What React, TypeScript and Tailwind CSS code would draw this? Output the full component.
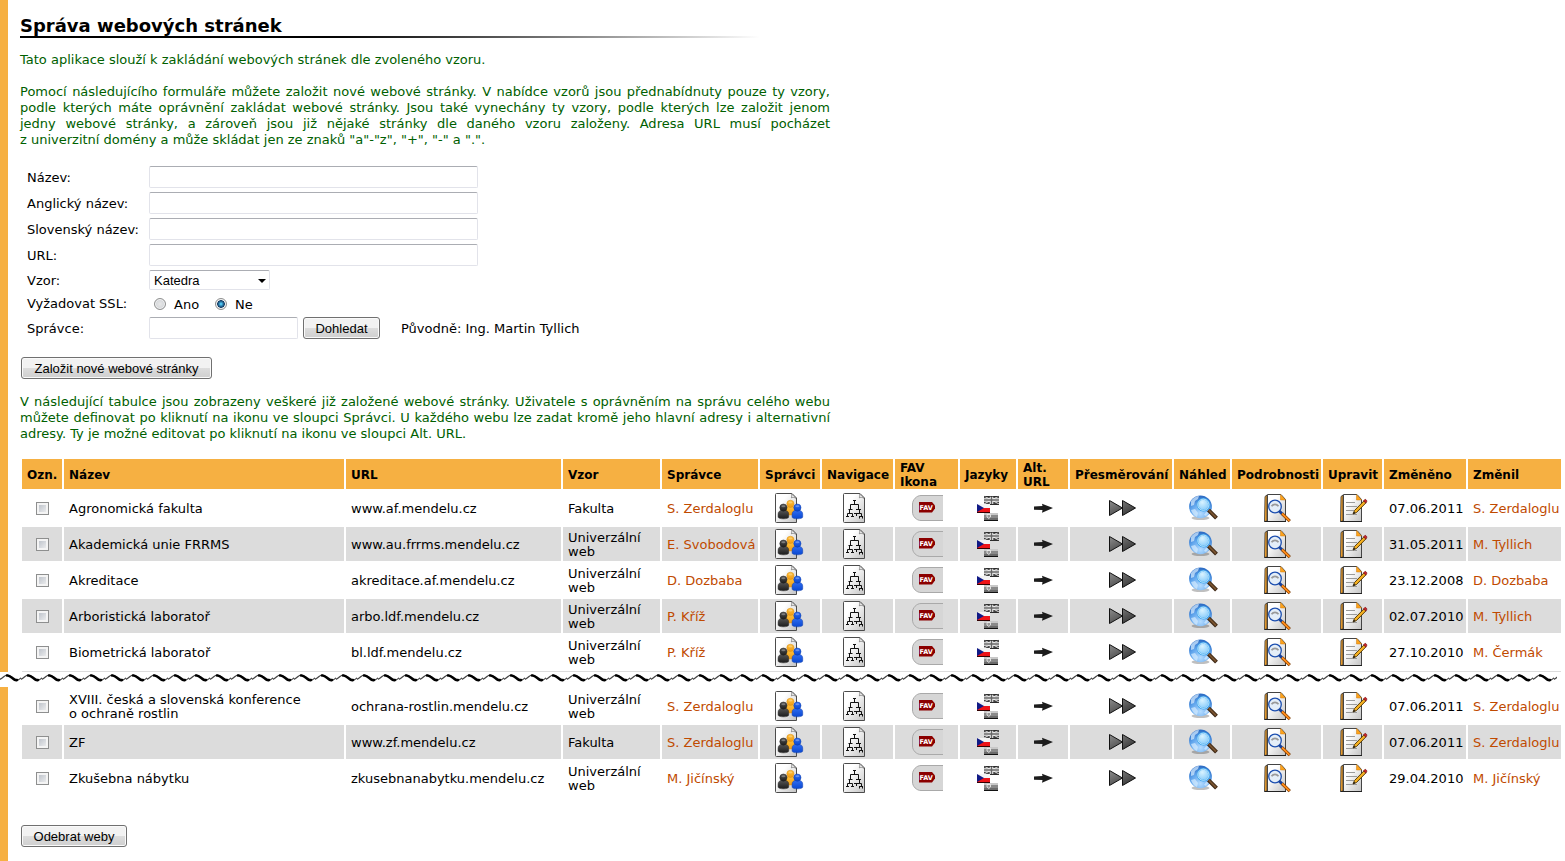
import type { ReactNode } from 'react';

type Site = {
  name: ReactNode;
  label: string;
  url: string;
  template: string;
  admin: string;
  changed: string;
  changedBy: string;
};

const UNI = 'Univerzální web';

const firstSites: Site[] = [
  { name: 'Agronomická fakulta', label: 'Agronomická fakulta', url: 'www.af.mendelu.cz', template: 'Fakulta', admin: 'S. Zerdaloglu', changed: '07.06.2011', changedBy: 'S. Zerdaloglu' },
  { name: 'Akademická unie FRRMS', label: 'Akademická unie FRRMS', url: 'www.au.frrms.mendelu.cz', template: UNI, admin: 'E. Svobodová', changed: '31.05.2011', changedBy: 'M. Tyllich' },
  { name: 'Akreditace', label: 'Akreditace', url: 'akreditace.af.mendelu.cz', template: UNI, admin: 'D. Dozbaba', changed: '23.12.2008', changedBy: 'D. Dozbaba' },
  { name: 'Arboristická laboratoř', label: 'Arboristická laboratoř', url: 'arbo.ldf.mendelu.cz', template: UNI, admin: 'P. Kříž', changed: '02.07.2010', changedBy: 'M. Tyllich' },
  { name: 'Biometrická laboratoř', label: 'Biometrická laboratoř', url: 'bl.ldf.mendelu.cz', template: UNI, admin: 'P. Kříž', changed: '27.10.2010', changedBy: 'M. Čermák' },
];

const lastSites: Site[] = [
  { name: <>XVIII. česká a slovenská konference<br />o&nbsp;ochraně rostlin</>, label: 'XVIII. konference', url: 'ochrana-rostlin.mendelu.cz', template: UNI, admin: 'S. Zerdaloglu', changed: '07.06.2011', changedBy: 'S. Zerdaloglu' },
  { name: 'ZF', label: 'ZF', url: 'www.zf.mendelu.cz', template: 'Fakulta', admin: 'S. Zerdaloglu', changed: '07.06.2011', changedBy: 'S. Zerdaloglu' },
  { name: 'Zkušebna nábytku', label: 'Zkušebna nábytku', url: 'zkusebnanabytku.mendelu.cz', template: UNI, admin: 'M. Jičínský', changed: '29.04.2010', changedBy: 'M. Jičínský' },
];

const headers = ['Ozn.', 'Název', 'URL', 'Vzor', 'Správce', 'Správci', 'Navigace', 'FAV Ikona', 'Jazyky', 'Alt. URL', 'Přesměrování', 'Náhled', 'Podrobnosti', 'Upravit', 'Změněno', 'Změnil'];

// gradients shared by all the row icons
function IconDefs() {
  return (
    <svg className="absolute h-0 w-0" aria-hidden="true">
      <defs>
        <linearGradient id="paper" x1="0" y1="0" x2="1" y2="1">
          <stop offset="0.3" stopColor="#fff" />
          <stop offset="1" stopColor="#c4c4c4" />
        </linearGradient>
        <linearGradient id="orange" x1="0" y1="0" x2="0" y2="1">
          <stop offset="0" stopColor="#ffc13a" />
          <stop offset="1" stopColor="#f29c14" />
        </linearGradient>
        <linearGradient id="blue" x1="0" y1="0" x2="0" y2="1">
          <stop offset="0" stopColor="#2f6cf0" />
          <stop offset="1" stopColor="#0a48d0" />
        </linearGradient>
        <linearGradient id="black" x1="0" y1="0" x2="0" y2="1">
          <stop offset="0" stopColor="#555" />
          <stop offset="1" stopColor="#1c1c1c" />
        </linearGradient>
        <linearGradient id="play" x1="0" y1="0" x2="1" y2="1">
          <stop offset="0" stopColor="#8d8d8d" />
          <stop offset="1" stopColor="#2b2b2b" />
        </linearGradient>
        <radialGradient id="globe" cx="0.5" cy="0.8" r="0.75">
          <stop offset="0" stopColor="#b4dcff" />
          <stop offset="0.6" stopColor="#5fa4ec" />
          <stop offset="1" stopColor="#2f6fc6" />
        </radialGradient>
        <radialGradient id="lens" cx="0.4" cy="0.3" r="0.8">
          <stop offset="0" stopColor="#d9f3ff" />
          <stop offset="1" stopColor="#7cc6fa" />
        </radialGradient>
      </defs>
    </svg>
  );
}

function Icon({ children }: { children: ReactNode }) {
  return <svg className="block h-8 w-8" viewBox="0 0 32 32" fill="none" aria-hidden="true">{children}</svg>;
}

function Sheet() {
  return (
    <>
      <path d="M2.5 1.5H18L22.5 6v24.5h-20a1 1 0 0 1-1-1v-27a1 1 0 0 1 1-1z" fill="url(#paper)" stroke="#4c4c4c" />
      <path d="M17.5 1.8c.6 1.5 .3 3-.2 4 1.2-.5 3-.6 4.700.4z" fill="#fff" stroke="#777" strokeWidth="0.8" />
    </>
  );
}

function Person({ x, y, fill, stroke }: { x: number; y: number; fill: string; stroke: string }) {
  return (
    <g transform={`translate(${x} ${y})`} fill={fill} stroke={stroke} strokeWidth="0.5">
      <path d="M-5.3 9.500V6.500C-5.300 4-3.500 2.800-1.800 2.800H1.800C3.500 2.800 5.300 4 5.300 6.500V9.500C5.300 11.800-5.300 11.800-5.300 9.500z" />
      <circle r="3.6" />
      <ellipse cy="-1.4" rx="2" ry="1" fill="#fff" fillOpacity="0.3" stroke="none" />
    </g>
  );
}

function ManagersIcon() {
  return (
    <Icon>
      <Sheet />
      <Person x={16.4} y={11.8} fill="url(#orange)" stroke="#d98a10" />
      <Person x={9.4} y={15.6} fill="url(#black)" stroke="#222" />
      <Person x={23.4} y={15.6} fill="url(#blue)" stroke="#0a3aa8" />
    </Icon>
  );
}

function NavIcon() {
  return (
    <Icon>
      <Sheet />
      <path
        d="M11 8.500h3M12.500 8.500v4M8.500 17v-4.500h8v4.500M6.500 17.500h4M14 17.500h5M7.500 17.500v4M5.500 24v-2.500h5V24M4 24.500h3M9 24.500h3M17.500 17.500v4M13.500 21.500h6V24M13 21.500h3M12 21.500h2M14.500 21.500v2.500M17.500 24v2.500M17 24.500h4M20.500 24.500v2"
        stroke="#111"
      />
    </Icon>
  );
}

function FavIcon() {
  return (
    <Icon>
      <path d="M32 3.500H10C5.500 3.500 1.500 8 1.500 12v8c0 4.500 4 8.500 8.500 8.500h22" fill="#d6d6d6" stroke="#a9a9a9" />
      <path d="M8 10h13l3 3.500v3L21 20.500H8z" fill="#8b0000" />
      <text x="8.500" y="17.500" fontSize="6.500" fontWeight="bold" fontFamily="DejaVu Sans, sans-serif" fill="#fff">FAV</text>
    </Icon>
  );
}

function LanguagesIcon() {
  return (
    <Icon>
      <rect x="12" y="4" width="15" height="9" fill="#444" />
      <path d="M12 4l15 8M27 4L12 12" stroke="#ddd" />
      <path d="M19.500 4v8M12 8h15" stroke="#f4f4f4" strokeWidth="3.500" />
      <path d="M19.500 4v8M12 8h15" stroke="#666" strokeWidth="1.500" />
      <path d="M12 4.500h15M12 12.500h15" stroke="#222" strokeOpacity="0.7" />
      <rect x="5" y="12" width="13" height="4" fill="#f4f4f4" />
      <rect x="5" y="16" width="13" height="4" fill="#ee1418" />
      <path d="M5 12l7 4-7 4z" fill="#101a86" />
      <path d="M5 20.500h13" stroke="#300" />
      <rect x="12" y="21" width="14" height="3" fill="#c8c8c8" />
      <rect x="12" y="23" width="14" height="3" fill="#8a8a8a" />
      <rect x="12" y="26" width="14" height="2" fill="#6a6a6a" />
      <path d="M15 22.500h3.500v2.500l-1.700 1.500L15 25z" fill="#999" stroke="#fff" strokeWidth="0.7" />
      <path d="M12 28.500h14" stroke="#111" />
    </Icon>
  );
}

function AltUrlIcon() {
  return (
    <Icon>
      <path d="M7 14.500L15.500 14 15 11.800 26 16 15 20.800 15.500 18 7 17.800z" fill="#1c1c1c" />
    </Icon>
  );
}

function RedirectIcon() {
  return (
    <Icon>
      <path d="M4.500 8.500l13 7.500-13 7.500zM17.500 8.500l13 7.500-13 7.500z" fill="url(#play)" stroke="#111" />
    </Icon>
  );
}

function PreviewIcon() {
  return (
    <Icon>
      <ellipse cx="14.500" cy="26" rx="9" ry="2" fill="#000" fillOpacity="0.25" />
      <circle cx="14.500" cy="14.800" r="11.400" fill="url(#globe)" />
      <path d="M5 9c2-3 5-5 8-5l-1 3-3 2-1 4-3 1zM5 18l4-1 3 4-1 4c-3-1-5-4-6-7zM20 20l4 0-4 4-2-1z" fill="#d7edff" fillOpacity="0.7" />
      <path d="M22.500 18.200l8 8" stroke="#3c2613" strokeWidth="4" />
      <path d="M22.500 17.900l7.500 7.600" stroke="#7a5430" strokeWidth="1.800" />
      <circle cx="17.400" cy="12.700" r="5.800" fill="url(#lens)" stroke="#3aa5ee" strokeWidth="1.800" />
      <circle cx="17.400" cy="12.700" r="5.600" stroke="#e2f5ff" strokeWidth="0.800" />
    </Icon>
  );
}

function OrangeSheet() {
  return (
    <>
      <path d="M4 4.500L6 3v26L3.500 29.500z" fill="#f0a02c" stroke="#333" strokeWidth="0.800" />
      <path d="M6.500 2.500H20l4.500 5v22h-18z" fill="url(#paper)" stroke="#444" />
      <path d="M19.500 2.500L24.500 8h-5z" fill="#ffa31a" stroke="#c87a10" strokeWidth="0.500" />
      <path d="M3.500 29.500h21.500" stroke="#222" />
    </>
  );
}

function DetailsIcon() {
  return (
    <Icon>
      <OrangeSheet />
      <circle cx="14" cy="14.500" r="6.300" fill="#e4eef8" stroke="#1c4fb0" strokeWidth="1.300" />
      <path d="M10.500 14.300c2-2.500 5-2.500 7 0" stroke="#9a9a9a" strokeWidth="1.800" />
      <path d="M18.300 19l3.200 3.200" stroke="#174099" strokeWidth="3" />
      <path d="M21 21.700l7.800 7.500" stroke="#7d3c00" strokeWidth="3.200" />
      <path d="M21 21.500l7.500 7.300" stroke="#ff8c1a" strokeWidth="1.800" />
    </Icon>
  );
}

function EditIcon() {
  return (
    <Icon>
      <OrangeSheet />
      <path d="M9 10.500h9M9 14.500h11M9 18.500h8M9 22.500h11" stroke="#9a9a9a" />
      <path d="M16 22l1.500-3.500L27 8.800l2 2L19.500 20.500z" fill="#f5b021" stroke="#4a3000" strokeWidth="0.900" />
      <path d="M26.500 8.800L28 7.300c1 0 2 1.200 1.800 2.200L28.800 11.200z" fill="#c8242b" stroke="#6b1010" strokeWidth="0.600" />
      <path d="M16 22l1-2.500 1.500 1.500z" fill="#222" />
    </Icon>
  );
}

const actions = [
  { title: 'Správci', icon: <ManagersIcon /> },
  { title: 'Navigace', icon: <NavIcon /> },
  { title: 'FAV ikona', icon: <FavIcon /> },
  { title: 'Jazyky', icon: <LanguagesIcon /> },
  { title: 'Alt. URL', icon: <AltUrlIcon /> },
  { title: 'Přesměrování', icon: <RedirectIcon /> },
  { title: 'Náhled', icon: <PreviewIcon /> },
  { title: 'Podrobnosti', icon: <DetailsIcon /> },
  { title: 'Upravit', icon: <EditIcon /> },
];

const inputClass = 'block h-[22px] rounded-xs border border-[#e2e3ea] border-t-[#abadb3] bg-white px-1 font-[Liberation_Sans,sans-serif] text-[13px]';
const buttonClass = 'block h-[22px] rounded-[3px] border border-[#707070] bg-linear-to-b from-[#f2f2f2] from-50% via-[#dddddd] via-50% to-[#cfcfcf] pt-0.5 font-[Liberation_Sans,sans-serif] text-[13px] leading-[18px] whitespace-nowrap shadow-[inset_0_0_0_1px_#fafafa]';
const radioClass = 'h-3 w-3 appearance-none rounded-full border border-[#8e8f8f] bg-radial from-[#e8e8e8] to-[#c9cdd2] shadow-[inset_0_0_0_1px_#f4f4f4] checked:from-[#4fc3f0] checked:from-10% checked:via-[#123a63] checked:via-50% checked:to-[#e8e8e8] checked:to-60%';
const textCell = 'pt-0.5 pb-0 pl-[5px]';

function Columns() {
  return (
    <colgroup>
      <col className="w-[40px]" />
      <col />
      <col className="w-[215px]" />
      <col className="w-[97px]" />
      <col className="w-[96px]" />
      <col className="w-[60px]" />
      <col className="w-[71px]" />
      <col className="w-[63px]" />
      <col className="w-[56px]" />
      <col className="w-[50px]" />
      <col className="w-[102px]" />
      <col className="w-[56px]" />
      <col className="w-[89px]" />
      <col className="w-[59px]" />
      <col className="w-[82px]" />
      <col className="w-[93px]" />
    </colgroup>
  );
}

function SiteRow({ site }: { site: Site }) {
  return (
    <tr className="even:[&>td]:bg-[#dcdcdc]">
      <td className="p-0">
        <input
          type="checkbox"
          aria-label={site.label}
          className="mx-auto block h-[13px] w-[13px] appearance-none border border-[#8e8f8f] bg-linear-to-br from-[#b4bac3] to-[#f6f6f6] shadow-[inset_0_0_0_2px_#f4f4f4] checked:bg-[#4b7fb5]"
        />
      </td>
      <td className={textCell}>{site.name}</td>
      <td className={`${textCell} whitespace-nowrap`}>{site.url}</td>
      <td className={`${textCell} pr-4`}>{site.template}</td>
      <td className={`${textCell} whitespace-nowrap`}><a href="#" className="text-[#c04a00]">{site.admin}</a></td>
      {actions.map((action) => (
        <td key={action.title} className="px-0 py-px">
          <a href="#" aria-label={`${action.title}: ${site.label}`} className="mx-auto block w-8">{action.icon}</a>
        </td>
      ))}
      <td className={`${textCell} whitespace-nowrap`}>{site.changed}</td>
      <td className={`${textCell} whitespace-nowrap`}><a href="#" className="text-[#c04a00]">{site.changedBy}</a></td>
    </tr>
  );
}

function TextRow({ id, label }: { id: string; label: string }) {
  return (
    <>
      <label htmlFor={id} className="pt-0.5">{label}</label>
      <input id={id} type="text" className={`${inputClass} w-[329px]`} />
    </>
  );
}

// torn edge between the start and the end of the list
function Tear() {
  return (
    <div className="h-[15px] pr-2">
      <svg className="block h-[15px] w-full" aria-hidden="true">
        <defs>
          <pattern id="wave" width="21" height="15" patternUnits="userSpaceOnUse">
            <path d="M-5 8C-1 9 1 7 4 4.500C7 2 9 2.500 12 5.500C14 8 16 9 18 8C20 7 22 5 25 3" fill="none" stroke="#444" strokeWidth="1.300" />
            <path d="M7 3.500C9 3 11 5 13 6.500C14.500 8 15.500 8.500 17 8" fill="none" stroke="#000" strokeWidth="2.600" strokeLinecap="round" />
          </pattern>
        </defs>
        <rect width="100%" height="15" fill="url(#wave)" />
      </svg>
    </div>
  );
}

export default function App() {
  return (
    <div className="flex min-h-screen flex-col bg-white font-[DejaVu_Sans,Verdana,sans-serif] text-[13px] leading-[14px] text-black">
      <IconDefs />
      <section className="border-l-8 border-[#f6b042] pt-[15px] pr-0.5 pl-3">
        <h1 className="text-[18px] leading-[21px] font-bold">Správa webových stránek</h1>
        <div className="h-0.5 max-w-[740px] bg-linear-to-r from-black from-35% to-white" />

        <div className="mt-3.5 max-w-[810px] text-justify leading-4 text-[#006000]">
          <p>Tato aplikace slouží k zakládání webových stránek dle zvoleného vzoru.</p>
          <p className="mt-4">
            <span className="block [text-align-last:justify]">
              Pomocí následujícího formuláře můžete založit nové webové stránky. V nabídce vzorů jsou přednabídnuty pouze ty vzory,
              podle kterých máte oprávnění zakládat webové stránky. Jsou také vynechány ty vzory, podle kterých lze založit jenom
              jedny webové stránky, a zároveň jsou již nějaké stránky dle daného vzoru založeny. Adresa URL musí pocházet
            </span>
            z&nbsp;univerzitní domény a může skládat jen ze znaků "a"-"z", "+", "-" a ".".
          </p>
        </div>

        <form onSubmit={(e) => e.preventDefault()}>
          <div className="mt-[18px] grid grid-cols-[118px_auto] items-center justify-start gap-1 pl-[7px] whitespace-nowrap">
            <TextRow id="name" label="Název:" />
            <TextRow id="name-en" label="Anglický název:" />
            <TextRow id="name-sk" label="Slovenský název:" />
            <TextRow id="url" label="URL:" />

            <label htmlFor="template" className="pt-0.5">Vzor:</label>
            <div className="relative h-5 w-[121px]">
              <select id="template" className="block h-5 w-full appearance-none rounded-xs border border-[#e2e3ea] border-t-[#abadb3] bg-white pt-0.5 pl-1 font-[Liberation_Sans,sans-serif] text-[13px] leading-4">
                <option>Katedra</option>
                <option>Fakulta</option>
                <option>Univerzální web</option>
              </select>
              <svg className="pointer-events-none absolute top-[9px] right-1 h-1 w-2" viewBox="0 0 8 4" aria-hidden="true">
                <path d="M0 0h8L4 4z" fill="#000" />
              </svg>
            </div>

            <span id="ssl-label">Vyžadovat SSL:</span>
            <div role="radiogroup" aria-labelledby="ssl-label" className="flex h-[19px] items-center gap-4 pl-[5px]">
              <label className="flex items-center gap-2">
                <input type="radio" name="ssl" className={radioClass} />
                <span className="pt-0.5">Ano</span>
              </label>
              <label className="flex items-center gap-2">
                <input type="radio" name="ssl" defaultChecked className={radioClass} />
                <span className="pt-0.5">Ne</span>
              </label>
            </div>

            <label htmlFor="manager" className="pt-0.5">Správce:</label>
            <div className="flex items-center">
              <input id="manager" type="text" className={`${inputClass} w-[149px]`} />
              <button type="button" className={`${buttonClass} ml-[5px] w-[77px]`}>Dohledat</button>
              <span className="ml-[21px] pt-0.5">Původně: Ing. Martin Tyllich</span>
            </div>
          </div>
          <button type="submit" className={`${buttonClass} mt-[18px] ml-px w-[191px]`}>Založit nové webové stránky</button>
        </form>

        <p className="mt-[15px] max-w-[810px] text-justify leading-4 text-[#006000]">
          V následující tabulce jsou zobrazeny veškeré již založené webové stránky. Uživatele s oprávněním na správu celého webu
          můžete definovat po kliknutí na ikonu ve sloupci Správci. U každého webu lze zadat kromě jeho hlavní adresy i alternativní
          adresy. Ty je možné editovat po kliknutí na ikonu ve sloupci Alt. URL.
        </p>

        <table className="mt-[15px] w-full min-w-[1400px] table-fixed border-separate border-spacing-0.5">
          <Columns />
          <thead>
            <tr>
              {headers.map((h) => (
                <th key={h} scope="col" className="h-[30px] bg-[#f6b042] pt-0.5 pb-0 pl-[5px] text-left text-[12px] font-bold">{h}</th>
              ))}
            </tr>
          </thead>
          <tbody>
            {firstSites.map((site) => <SiteRow key={site.label} site={site} />)}
          </tbody>
        </table>
        <div className="mx-0.5 h-px bg-[#dcdcdc]" />
      </section>

      <Tear />

      <section className="grow border-l-8 border-[#f6b042] pr-0.5 pb-3.5 pl-3">
        <table aria-label="Webové stránky" className="w-full min-w-[1400px] table-fixed border-separate border-spacing-0.5">
          <Columns />
          <tbody>
            {lastSites.map((site) => <SiteRow key={site.label} site={site} />)}
          </tbody>
        </table>
        <button type="button" className={`${buttonClass} mt-7 ml-px w-[106px]`}>Odebrat weby</button>
      </section>
    </div>
  );
}
